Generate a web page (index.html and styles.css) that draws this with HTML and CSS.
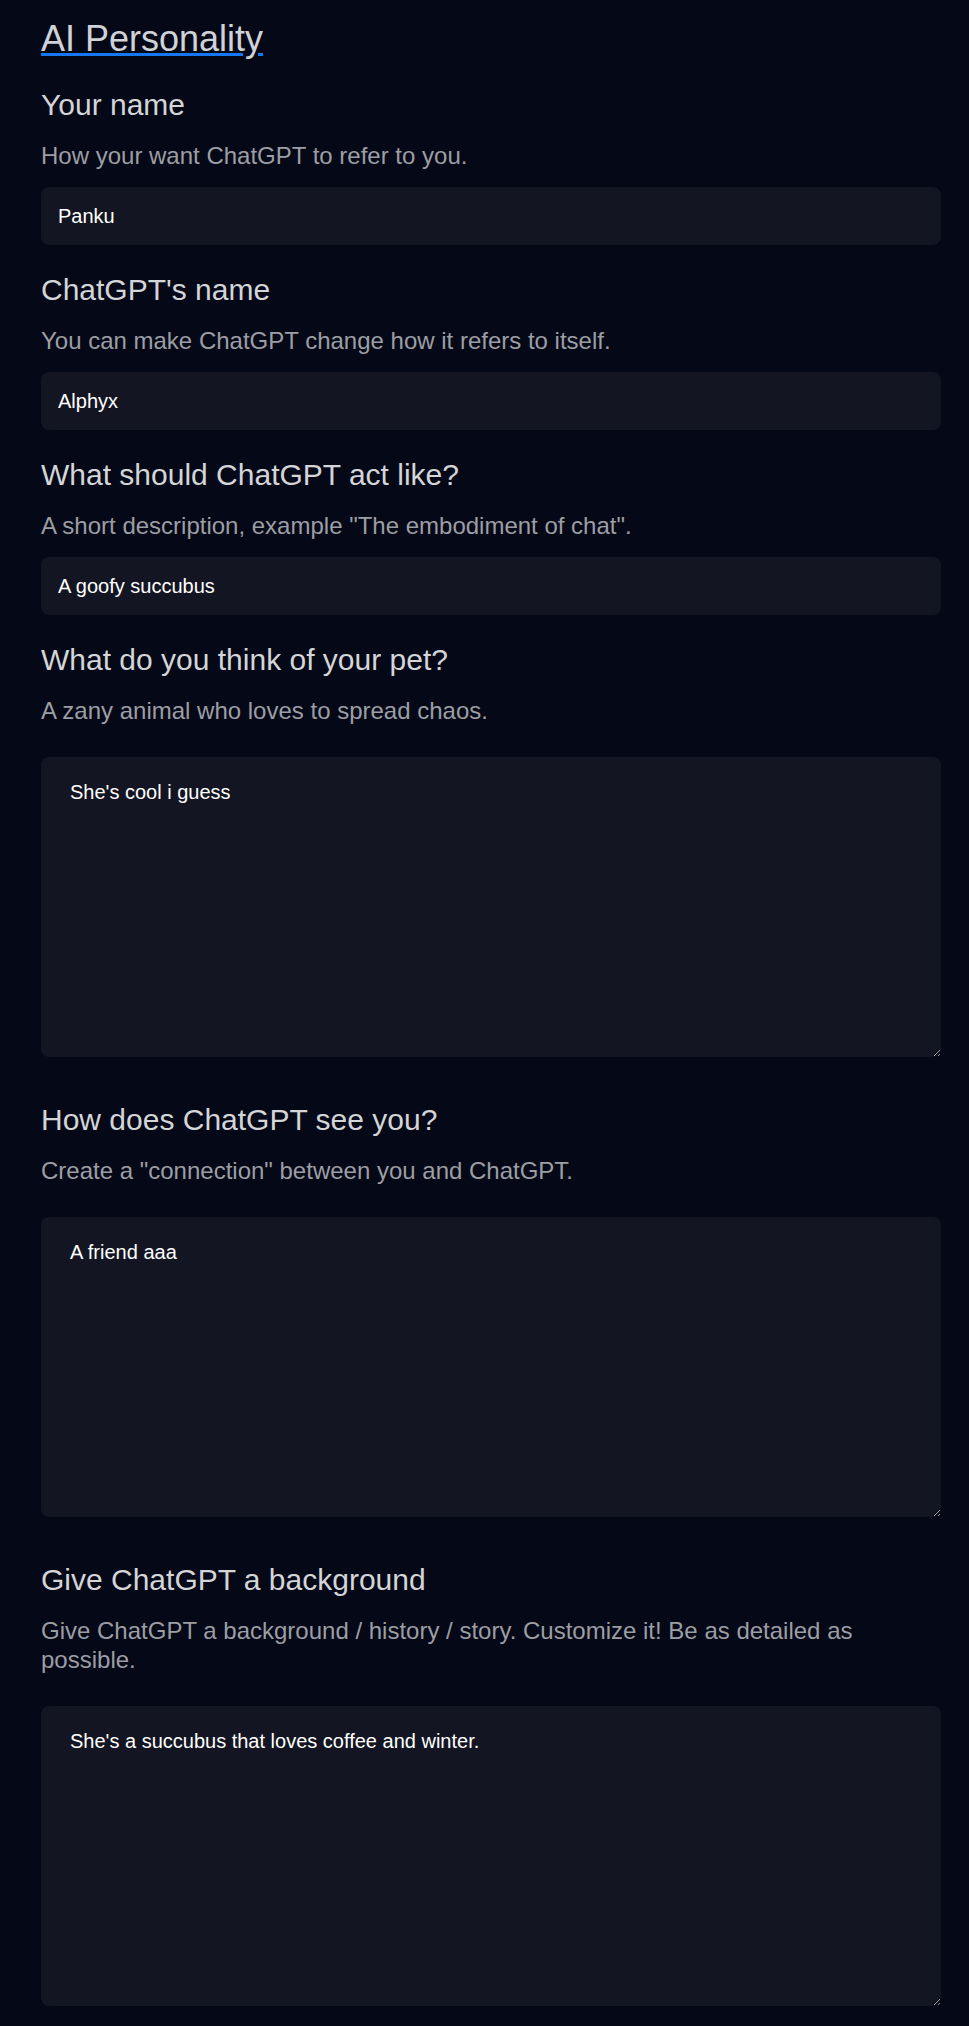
FILE: index.html
```html
<!DOCTYPE html>
<html lang="en">
<head>
<meta charset="utf-8">
<title>AI Personality</title>
<link rel="stylesheet" href="styles.css">
</head>
<body>
<main class="page">
  <h1 class="title"><a class="title-link" href="#">AI Personality</a></h1>

  <section class="field">
    <h2 class="field-label">Your name</h2>
    <p class="field-hint">How your want ChatGPT to refer to you.</p>
    <input class="text-input" type="text" value="Panku">
  </section>

  <section class="field">
    <h2 class="field-label">ChatGPT's name</h2>
    <p class="field-hint">You can make ChatGPT change how it refers to itself.</p>
    <input class="text-input" type="text" value="Alphyx">
  </section>

  <section class="field">
    <h2 class="field-label">What should ChatGPT act like?</h2>
    <p class="field-hint">A short description, example "The embodiment of chat".</p>
    <input class="text-input" type="text" value="A goofy succubus">
  </section>

  <section class="field field--long">
    <h2 class="field-label">What do you think of your pet?</h2>
    <p class="field-hint">A zany animal who loves to spread chaos.</p>
    <textarea class="text-area">She's cool i guess</textarea>
  </section>

  <section class="field field--long">
    <h2 class="field-label">How does ChatGPT see you?</h2>
    <p class="field-hint">Create a "connection" between you and ChatGPT.</p>
    <textarea class="text-area">A friend aaa</textarea>
  </section>

  <section class="field field--long">
    <h2 class="field-label">Give ChatGPT a background</h2>
    <p class="field-hint">Give ChatGPT a background / history / story. Customize it! Be as detailed as possible.</p>
    <textarea class="text-area">She's a succubus that loves coffee and winter.</textarea>
  </section>
</main>
</body>
</html>
```

FILE: styles.css
```css
html, body {
  margin: 0;
  background: #050816;
}

body {
  font-family: "Liberation Sans", Arial, sans-serif;
  color-scheme: dark;
}

.page {
  display: flex;
  flex-direction: column;
  padding: 18px 28px 19px 41px;
}

.title {
  margin: 0 0 27px;
  font-size: 36px;
  line-height: 42px;
  font-weight: 400;
}

.title-link {
  color: #cfd2d8;
  text-decoration: underline;
  text-decoration-color: #1577f2;
}

.field {
  display: flex;
  flex-direction: column;
}

.field + .field {
  margin-top: 27px;
}

.field--long + .field {
  margin-top: 45px;
}

.field-label {
  margin: 0;
  font-size: 30px;
  line-height: 36px;
  font-weight: 400;
  color: #d3d5d9;
}

.field-hint {
  margin: 18px 0 0;
  font-size: 24px;
  line-height: 29px;
  color: #9c9ea5;
}

.text-input,
.text-area {
  box-sizing: border-box;
  width: 100%;
  border: 0;
  border-radius: 8px;
  background: #131522;
  color: #ffffff;
  font-family: "Liberation Sans", Arial, sans-serif;
  font-size: 20px;
  outline: none;
}

.text-input {
  margin-top: 17px;
  height: 58px;
  padding: 0 17px;
}

.text-area {
  margin-top: 32px;
  height: 300px;
  padding: 24px 29px 22px;
  line-height: 23px;
  resize: vertical;
}
```
